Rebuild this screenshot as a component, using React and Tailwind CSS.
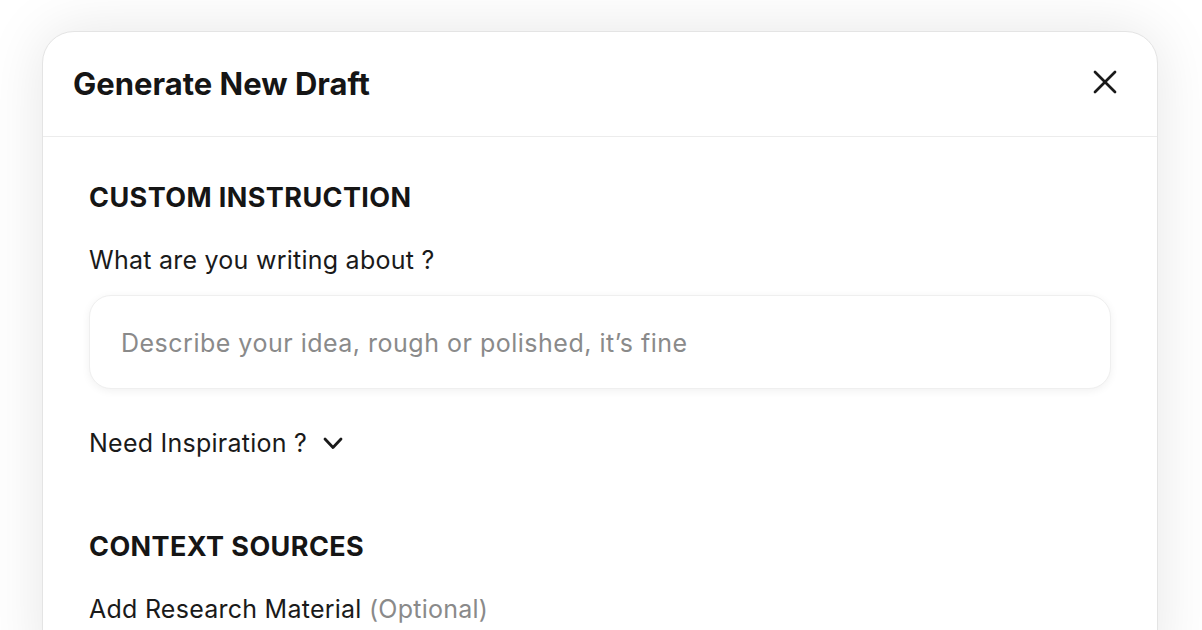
import React from 'react';
import { X } from 'lucide-react';

const App = () => {
  return (
    <div className="min-h-screen bg-white overflow-hidden" style={{ fontFamily: 'Inter, "Noto Sans", sans-serif' }}>
      <div className="pt-[31px] pl-[42px] pr-[44px]">
        <div className="h-[640px] rounded-t-[32px] border border-[#e4e4e4] bg-white shadow-[0_0_60px_rgba(0,0,0,0.10)]">
          {/* Header */}
          <div className="flex items-center justify-between h-[105px] pl-[30px] pr-[32px] border-b border-[#ececec]">
            <h2 className="text-[31px] font-bold tracking-[0em] text-[#151515]">Generate New Draft</h2>
            <button className="text-[#1a1a1a] -mt-[5px]">
              <X size={40} strokeWidth={1.6} />
            </button>
          </div>

          {/* Body */}
          <div className="px-[46px] pt-[45px]">
            <h3 className="text-[27px] leading-[32px] font-bold tracking-[0.015em] text-[#151515]">CUSTOM INSTRUCTION</h3>
            <p className="mt-[31px] text-[25px] leading-[30px] tracking-[0.01em] text-[#1a1a1a]">What are you writing about ?</p>
            <div className="mt-[20px] h-[94px] rounded-[22px] border border-[#efefef] bg-white shadow-[0_2px_8px_rgba(0,0,0,0.06)] flex items-center px-[31px] pt-[4px]">
              <span className="text-[25px] tracking-[0.02em] text-[#8a8a8a]">Describe your idea, rough or polished, it’s fine</span>
            </div>
            <div className="mt-[39px] flex items-center gap-[16px] text-[25px] leading-[30px] tracking-[0.01em] text-[#1a1a1a]">
              <span>Need Inspiration ?</span>
              <svg width="20" height="13" viewBox="0 0 20 13" fill="none" stroke="#1a1a1a" strokeWidth="2.8" strokeLinecap="round" strokeLinejoin="round">
                <polyline points="2,2 10,10.5 18,2" />
              </svg>
            </div>
            <h3 className="mt-[73px] text-[27px] leading-[32px] font-bold tracking-[0.015em] text-[#151515]">CONTEXT SOURCES</h3>
            <p className="mt-[31px] text-[25px] leading-[30px] tracking-[0.01em] text-[#1a1a1a]">
              Add Research Material <span className="text-[#8a8a8a]">(Optional)</span>
            </p>
          </div>
        </div>
      </div>
    </div>
  );
};

export default App;
